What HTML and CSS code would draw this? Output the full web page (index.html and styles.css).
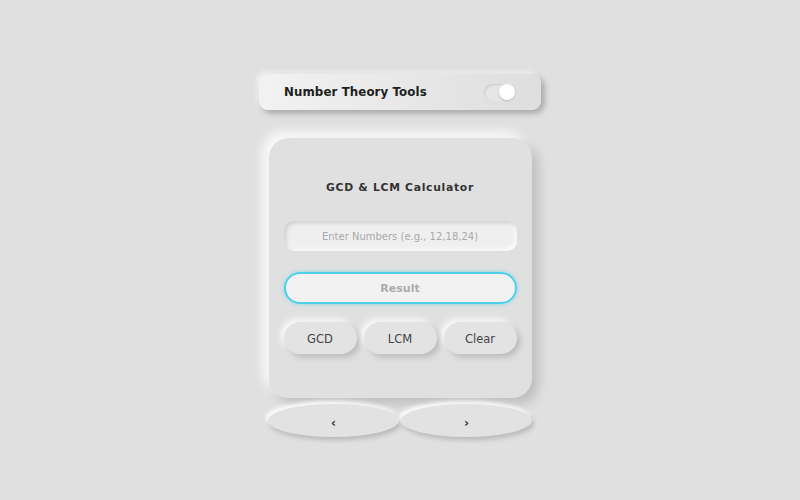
FILE: index.html
```html
<!DOCTYPE html>
<html>
<head>
<meta charset="utf-8">
<link rel="stylesheet" href="styles.css">
</head>
<body>
<div class="page">
  <div class="topbar">
    <span class="topbar-title">Number Theory Tools</span>
    <span class="toggle"><span class="knob"></span></span>
  </div>
  <div class="card">
    <h2 class="card-title">GCD &amp; LCM Calculator</h2>
    <input class="num-input" type="text" placeholder="Enter Numbers (e.g., 12,18,24)">
    <div class="result">Result</div>
    <div class="actions">
      <button class="btn">GCD</button>
      <button class="btn">LCM</button>
      <button class="btn">Clear</button>
    </div>
  </div>
  <div class="nav">
    <button class="nav-btn">‹</button>
    <button class="nav-btn">›</button>
  </div>
</div>
</body>
</html>
```
FILE: styles.css
```css
html, body {
  margin: 0;
  padding: 0;
  background: #e0e0e0;
  font-family: "DejaVu Sans", "Open Sans", sans-serif;
}
.page {
  width: 800px;
  height: 500px;
  display: flex;
  flex-direction: column;
  align-items: center;
  padding-top: 74px;
  box-sizing: border-box;
}
.topbar {
  width: 282px;
  height: 36px;
  box-sizing: border-box;
  border-radius: 9px;
  background: linear-gradient(90deg, #f2f2f2, #dedede);
  box-shadow: 3px 3px 6px rgba(0,0,0,0.28), -2px -2px 5px rgba(255,255,255,0.7);
  display: flex;
  align-items: center;
  justify-content: space-between;
  padding: 0 25px 0 25px;
}
.topbar-title {
  font-weight: bold;
  font-size: 11.8px;
  color: #1e1e1e;
  letter-spacing: 0.1px;
}
.toggle {
  width: 32px;
  height: 17px;
  border-radius: 9px;
  background: #e6e6e6;
  box-shadow: inset 1px 1px 2px rgba(0,0,0,0.12);
  display: flex;
  align-items: center;
  justify-content: flex-end;
  padding: 0 1px;
  box-sizing: border-box;
}
.knob {
  width: 16px;
  height: 16px;
  border-radius: 50%;
  background: #fff;
  box-shadow: 0 1px 2px rgba(0,0,0,0.2);
}
.card {
  margin-top: 28px;
  width: 263px;
  height: 260px;
  box-sizing: border-box;
  border-radius: 20px;
  background: #e0e0e0;
  box-shadow: 6px 6px 12px rgba(0,0,0,0.16), -6px -6px 12px rgba(255,255,255,0.9);
  padding: 43px 15px 0 15px;
  display: flex;
  flex-direction: column;
}
.card-title {
  margin: 0;
  text-align: center;
  font-size: 10.8px;
  font-weight: bold;
  letter-spacing: 0.7px;
  color: #333;
  height: 14px;
  line-height: 14px;
}
.num-input {
  margin-top: 26px;
  height: 30px;
  width: 100%;
  box-sizing: border-box;
  border: none;
  outline: none;
  border-radius: 10px;
  background: #efefef;
  box-shadow: inset 2px 2px 4px rgba(0,0,0,0.14), inset -2px -2px 4px rgba(255,255,255,0.9);
  text-align: center;
  font-family: inherit;
  font-size: 10px;
  color: #444;
}
.num-input::placeholder {
  color: #a9a9a9;
}
.result {
  margin-top: 21px;
  height: 32px;
  box-sizing: border-box;
  border: 2px solid #4fd0ea;
  border-radius: 16px;
  background: #f2f2f2;
  box-shadow: 0 0 4px rgba(79,208,234,0.6);
  display: flex;
  align-items: center;
  justify-content: center;
  padding-top: 1px;
  font-size: 11px;
  font-weight: bold;
  color: #ababab;
}
.actions {
  margin-top: 18px;
  display: flex;
  gap: 7px;
}
.btn {
  flex: 1;
  height: 32px;
  border: none;
  border-radius: 16px;
  background: #e3e3e3;
  box-shadow: 3px 3px 6px rgba(0,0,0,0.18), -3px -3px 6px rgba(255,255,255,0.9);
  font-family: inherit;
  font-size: 11.5px;
  color: #444;
  padding: 2px 0 0 0;
}
.nav {
  margin-top: 6px;
  display: flex;
  gap: 2px;
}
.nav-btn {
  width: 131px;
  height: 33px;
  border: none;
  border-radius: 50%;
  background: #e2e2e2;
  box-shadow: 2px 3px 5px rgba(0,0,0,0.18), -2px -3px 4px rgba(255,255,255,0.95);
  font-family: inherit;
  font-size: 12px;
  font-weight: bold;
  color: #333;
  padding: 4px 0 0 0;
}
```
